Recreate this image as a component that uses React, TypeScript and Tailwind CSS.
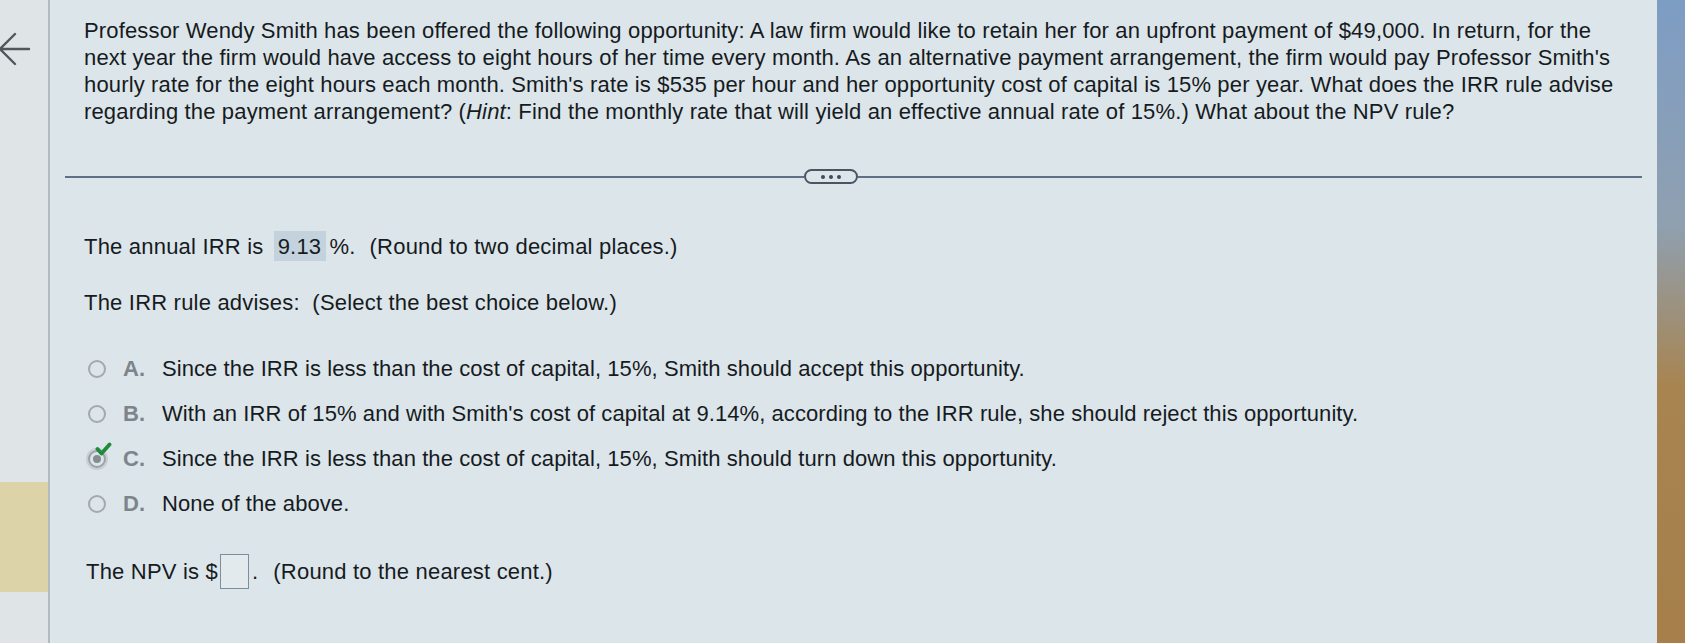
import React from "react";

const lines = [
  "Professor Wendy Smith has been offered the following opportunity: A law firm would like to retain her for an upfront payment of $49,000. In return, for the",
  "next year the firm would have access to eight hours of her time every month. As an alternative payment arrangement, the firm would pay Professor Smith's",
  "hourly rate for the eight hours each month. Smith's rate is $535 per hour and her opportunity cost of capital is 15% per year. What does the IRR rule advise",
];

const options = [
  { l: "A.", t: "Since the IRR is less than the cost of capital, 15%, Smith should accept this opportunity.", sel: false },
  { l: "B.", t: "With an IRR of 15% and with Smith's cost of capital at 9.14%, according to the IRR rule, she should reject this opportunity.", sel: false },
  { l: "C.", t: "Since the IRR is less than the cost of capital, 15%, Smith should turn down this opportunity.", sel: true },
  { l: "D.", t: "None of the above.", sel: false },
];

function Radio({ sel }: { sel: boolean }) {
  return (
    <div className="relative w-[18px] h-[18px] shrink-0">
      <div
        className={
          sel
            ? "w-[18px] h-[18px] rounded-full border-2 border-[#9ba1a6] flex items-center justify-center shadow-[0_0_0_2px_#c8cfd4]"
            : "w-[18px] h-[18px] rounded-full border-2 border-[#a3a9ad]"
        }
      >
        {sel && <div className="w-[8px] h-[8px] rounded-full bg-[#868c91]" />}
      </div>
      {sel && (
        <svg className="absolute left-[7px] top-[-8px]" width="17" height="15" viewBox="0 0 17 15">
          <path d="M2.5 7 L6.5 11.5 L14.5 2.5" fill="none" stroke="#1f8a3c" strokeWidth="3.8" strokeLinecap="round" strokeLinejoin="round" />
        </svg>
      )}
    </div>
  );
}

export default function App() {
  return (
    <div className="w-[1685px] h-[643px] flex overflow-hidden bg-[#dce5ea] text-[#161b21] font-['Liberation_Sans',Arial,sans-serif]">
      {/* left strip */}
      <div className="w-[50px] shrink-0 flex flex-col bg-[#dfe4e7] border-r-2 border-[#b3bbc0]">
        <div className="pt-[31px] -ml-[3px]">
          <svg width="34" height="36" viewBox="0 0 34 36">
            <path d="M32 18 H4 M18 3 L3 18 L18 33" fill="none" stroke="#50575d" strokeWidth="2.4" strokeLinecap="round" strokeLinejoin="round" />
          </svg>
        </div>
        <div className="mt-[415px] h-[110px] bg-[#dcd3a9]" />
      </div>

      {/* main */}
      <div className="flex-1 flex flex-col">
        <div className="pl-[34px] pt-[17px] text-[22px] leading-[27px] tracking-[0.15px]">
          {lines.map((s, i) => (
            <div key={i} className="whitespace-nowrap">{s}</div>
          ))}
          <div className="whitespace-nowrap">
            regarding the payment arrangement? (<i>Hint</i>: Find the monthly rate that will yield an effective annual rate of 15%.) What about the NPV rule?
          </div>
        </div>

        <div className="mt-[44px] mx-[15px] h-[15px] flex items-center">
          <div className="w-[739px] h-[2px] bg-[#5f6f85]" />
          <div className="w-[54px] h-[15px] rounded-full border-2 border-[#4a5562] flex items-center justify-center gap-[4px]">
            <div className="w-[4px] h-[4px] rounded-full bg-[#3f4a57]" />
            <div className="w-[4px] h-[4px] rounded-full bg-[#3f4a57]" />
            <div className="w-[4px] h-[4px] rounded-full bg-[#3f4a57]" />
          </div>
          <div className="flex-1 h-[2px] bg-[#5f6f85]" />
        </div>

        <div className="pl-[34px] text-[22px] tracking-[0.2px]">
          <div className="mt-[47px] h-[30px] flex items-center whitespace-nowrap">
            <span>The annual IRR is</span>
            <span className="ml-[10px] h-[30px] w-[52px] bg-[#c4d2dd] flex items-center justify-center">9.13</span>
            <span className="ml-[4px]">%.</span>
            <span className="ml-[14px]">(Round to two decimal places.)</span>
          </div>

          <div className="mt-[28px] leading-[27px] whitespace-nowrap">
            The IRR rule advises:&nbsp;&nbsp;(Select the best choice below.)
          </div>

          <div className="mt-[30px] flex flex-col tracking-[0.08px]">
            {options.map((o) => (
              <div key={o.l} className="h-[45px] flex items-center whitespace-nowrap">
                <div className="ml-[4px]">
                  <Radio sel={o.sel} />
                </div>
                <span className="ml-[17px] w-[39px] font-bold text-[#7d848a]">{o.l}</span>
                <span>{o.t}</span>
              </div>
            ))}
          </div>

          <div className="mt-[28px] h-[35px] flex items-center whitespace-nowrap ml-[2px]">
            <span>The NPV is $</span>
            <span className="ml-[2px] w-[29px] h-[35px] border border-[#7d8d9c] bg-[#e2eaee]" />
            <span className="ml-[3px]">.</span>
            <span className="ml-[15px]">(Round to the nearest cent.)</span>
          </div>
        </div>
      </div>

      {/* right edge */}
      <div className="w-[28px] shrink-0 bg-[linear-gradient(to_bottom,#7e9dc4_0%,#8fa0b0_35%,#a88451_60%,#a67f4a_100%)]" />
    </div>
  );
}
